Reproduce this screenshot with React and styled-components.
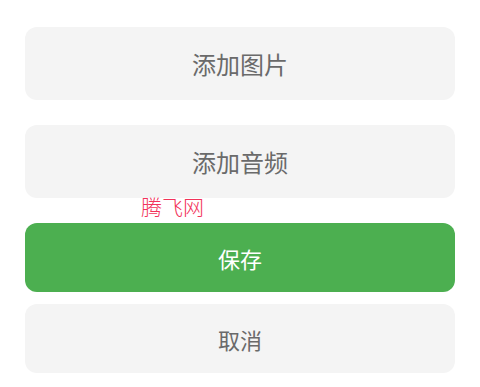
import React from "react";
import styled, { createGlobalStyle } from "styled-components";

const Global = createGlobalStyle`
  html, body { margin: 0; padding: 0; background: #fff; }
  body { font-family: "Noto Sans CJK SC", "Noto Sans", sans-serif; }
`;

const Page = styled.div`
  position: relative;
  display: flex;
  flex-direction: column;
  padding: 27px 25px 14px;
  width: 480px;
  box-sizing: border-box;
`;

const Button = styled.button`
  display: flex;
  align-items: center;
  justify-content: center;
  width: 100%;
  height: ${(p) => p.$h}px;
  margin-top: ${(p) => p.$mt || 0}px;
  border: none;
  border-radius: 12px;
  background: ${(p) => (p.$primary ? "#4caf50" : "#f4f4f4")};
  color: ${(p) => (p.$primary ? "#ffffff" : "#6a6a6a")};
  font-family: "Noto Sans CJK SC", "Noto Sans", sans-serif;
  font-size: ${(p) => p.$fs}px;
  font-weight: 400;
  padding: 0;
  cursor: pointer;
`;

const Watermark = styled.span`
  position: absolute;
  left: 141px;
  top: 191px;
  font-family: "Noto Sans CJK SC", sans-serif;
  font-size: 21px;
  font-weight: 300;
  color: #f2335a;
  line-height: 30px;
  pointer-events: none;
`;

export default function App() {
  return (
    <>
      <Global />
      <Page>
        <Button $h={73} $fs={24}>添加图片</Button>
        <Button $h={73} $fs={24} $mt={25}>添加音频</Button>
        <Button $h={69} $fs={22} $mt={25} $primary>保存</Button>
        <Button $h={69} $fs={22} $mt={12}>取消</Button>
        <Watermark>腾飞网</Watermark>
      </Page>
    </>
  );
}
